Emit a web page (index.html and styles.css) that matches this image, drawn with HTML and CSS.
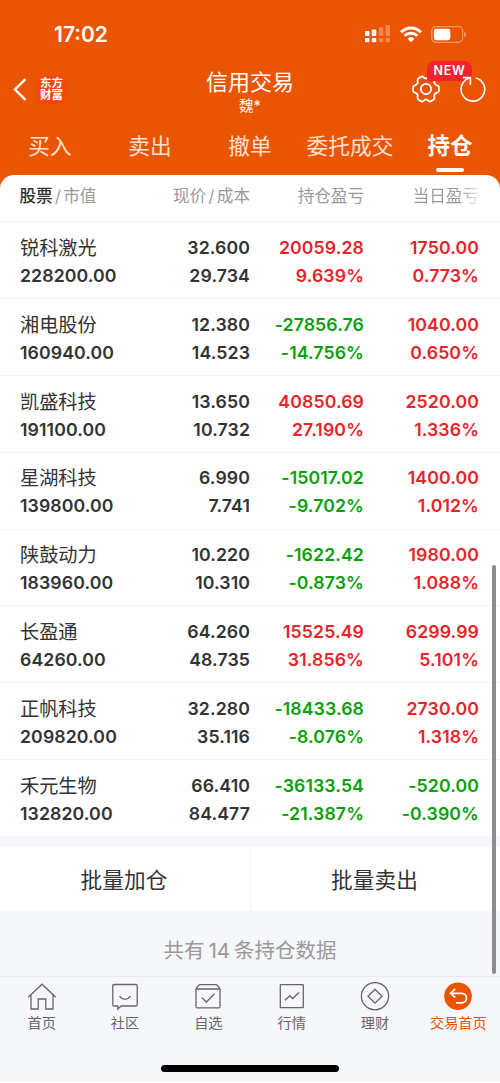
FILE: index.html
```html
<!DOCTYPE html>
<html lang="zh-CN">
<head>
  <meta charset="UTF-8" />
  <meta name="viewport" content="width=device-width, initial-scale=1.0"/>
  <title>信用交易 - 持仓</title>
  <link rel="stylesheet" href="styles.css">
</head>
<body>

  <div class="app">
    <header class="header">
      <div class="status-bar">
        <span class="time">17:02</span>
        <div class="status-icons">
          <svg width="26" height="18" viewBox="0 0 26 18" fill="#fff">
            <rect x="0" y="6" width="4.5" height="5" rx="1"/>
            <rect x="0" y="13" width="4.5" height="4.2" rx="1"/>
            <rect x="6.8" y="4.5" width="4.5" height="6.5" rx="1"/>
            <rect x="6.8" y="13" width="4.5" height="4.2" rx="1"/>
            <g opacity="0.3">
              <rect x="13.8" y="2.3" width="4.5" height="8.7" rx="1"/>
              <rect x="13.8" y="13" width="4.5" height="4.2" rx="1"/>
              <rect x="20.5" y="0" width="4.5" height="11" rx="1"/>
              <rect x="20.5" y="13" width="4.5" height="4.2" rx="1"/>
            </g>
          </svg>
          <svg width="22" height="17" viewBox="0 0 22 17" fill="none" stroke="#fff" stroke-width="2.9">
            <path d="M1 6.2C6.6 0.5 15.4 0.5 21 6.2"/>
            <path d="M4.6 9.8C8.2 6.3 13.8 6.3 17.4 9.8"/>
            <path d="M7.6 12.7C9.5 10.9 12.5 10.9 14.4 12.7L11 16.2Z" fill="#fff" stroke="none"/>
          </svg>
          <svg width="36" height="17" viewBox="0 0 36 17">
            <rect x="0.7" y="0.7" width="31" height="15.6" rx="4.5" fill="none" stroke="#fff" stroke-opacity="0.4" stroke-width="1.2"/>
            <rect x="2.8" y="2.8" width="16.5" height="11.4" rx="2.4" fill="#fff"/>
            <path d="M33.2 5.8C35.5 6.5 35.5 10.5 33.2 11.2Z" fill="#fff" fill-opacity="0.45"/>
          </svg>
        </div>
      </div>

      <div class="title-bar">
        <div class="title-left">
          <svg width="14" height="23" viewBox="0 0 14 23" fill="none" stroke="#fff" stroke-width="2.4">
            <path d="M12.5 1.2L2 11.5L12.5 21.8"/>
          </svg>
          <div class="logo"><span>东方</span><span>财富</span></div>
        </div>
        <div class="title-center">
          <h1>信用交易</h1>
          <p>魏*</p>
        </div>
        <div class="title-right">
          <svg width="30" height="30" viewBox="0 0 30 30" fill="none" stroke="#fff" stroke-width="1.8" stroke-linejoin="round">
            <path d="M9.9 2.9Q11.4 2 12.4 3.2Q15 5.8 17.6 3.2Q18.6 2 20.1 2.9L22.4 4.2Q23.8 5.2 23.4 6.8Q22.6 10.4 26.1 11.3Q27.9 11.7 27.9 13.2V16.8Q27.9 18.3 26.1 18.7Q22.6 19.6 23.4 23.2Q23.8 24.8 22.4 25.8L20.1 27.1Q18.6 28 17.6 26.8Q15 24.2 12.4 26.8Q11.4 28 9.9 27.1L7.6 25.8Q6.2 24.8 6.6 23.2Q7.4 19.6 3.9 18.7Q2.1 18.3 2.1 16.8V13.2Q2.1 11.7 3.9 11.3Q7.4 10.4 6.6 6.8Q6.2 5.2 7.6 4.2Z"/>
            <circle cx="15" cy="15" r="5.2"/>
          </svg>
          <svg class="refresh" width="28" height="28" viewBox="0 0 28 28" fill="none" stroke="#fff" stroke-width="1.6">
            <path d="M17 2.9A11.8 11.8 0 1 1 11.2 2.8"/>
            <path d="M3.9 2.6H11.4V10"/>
          </svg>
          <span class="badge">NEW</span>
        </div>
      </div>

      <nav class="tabs">
        <a>买入</a>
        <a>卖出</a>
        <a>撤单</a>
        <a>委托成交</a>
        <a class="active">持仓</a>
      </nav>
    </header>

    <main class="content">
      <section class="positions">
        <div class="table-head">
          <div><b>股票</b><i>/</i>市值</div>
          <div>现价<i>/</i>成本</div>
          <div>持仓盈亏</div>
          <div class="fade">当日盈亏</div>
        </div>

        <div class="row">
          <div><span class="name">锐科激光</span><span>228200.00</span></div>
          <div><span>32.600</span><span>29.734</span></div>
          <div class="up"><span>20059.28</span><span>9.639%</span></div>
          <div class="up"><span>1750.00</span><span>0.773%</span></div>
        </div>
        <div class="row">
          <div><span class="name">湘电股份</span><span>160940.00</span></div>
          <div><span>12.380</span><span>14.523</span></div>
          <div class="down"><span>-27856.76</span><span>-14.756%</span></div>
          <div class="up"><span>1040.00</span><span>0.650%</span></div>
        </div>
        <div class="row">
          <div><span class="name">凯盛科技</span><span>191100.00</span></div>
          <div><span>13.650</span><span>10.732</span></div>
          <div class="up"><span>40850.69</span><span>27.190%</span></div>
          <div class="up"><span>2520.00</span><span>1.336%</span></div>
        </div>
        <div class="row">
          <div><span class="name">星湖科技</span><span>139800.00</span></div>
          <div><span>6.990</span><span>7.741</span></div>
          <div class="down"><span>-15017.02</span><span>-9.702%</span></div>
          <div class="up"><span>1400.00</span><span>1.012%</span></div>
        </div>
        <div class="row">
          <div><span class="name">陕鼓动力</span><span>183960.00</span></div>
          <div><span>10.220</span><span>10.310</span></div>
          <div class="down"><span>-1622.42</span><span>-0.873%</span></div>
          <div class="up"><span>1980.00</span><span>1.088%</span></div>
        </div>
        <div class="row">
          <div><span class="name">长盈通</span><span>64260.00</span></div>
          <div><span>64.260</span><span>48.735</span></div>
          <div class="up"><span>15525.49</span><span>31.856%</span></div>
          <div class="up"><span>6299.99</span><span>5.101%</span></div>
        </div>
        <div class="row">
          <div><span class="name">正帆科技</span><span>209820.00</span></div>
          <div><span>32.280</span><span>35.116</span></div>
          <div class="down"><span>-18433.68</span><span>-8.076%</span></div>
          <div class="up"><span>2730.00</span><span>1.318%</span></div>
        </div>
        <div class="row">
          <div><span class="name">禾元生物</span><span>132820.00</span></div>
          <div><span>66.410</span><span>84.477</span></div>
          <div class="down"><span>-36133.54</span><span>-21.387%</span></div>
          <div class="down"><span>-520.00</span><span>-0.390%</span></div>
        </div>
      </section>

      <div class="batch">
        <button>批量加仓</button>
        <button>批量卖出</button>
      </div>

      <p class="summary">共有<span>14</span>条持仓数据</p>
      <div class="scrollbar"></div>
    </main>

    <nav class="bottom-nav">
      <a>
        <svg width="30" height="30" viewBox="0 0 30 30">
          <path d="M1.2 15.2L15 2.2L28.8 15.2M4 13V27H11.2V17H18.8V27H26V13"/>
        </svg>
        首页
      </a>
      <a>
        <svg width="30" height="30" viewBox="0 0 30 30">
          <path d="M4 2.5H26Q27.2 2.5 27.2 3.7V22.8Q27.2 24 26 24H11.2L7.8 27V24H4Q2.8 24 2.8 22.8V3.7Q2.8 2.5 4 2.5Z"/>
          <path d="M9.5 14.3Q15 20.6 20.5 14.3"/>
        </svg>
        社区
      </a>
      <a>
        <svg width="30" height="30" viewBox="0 0 30 30">
          <path d="M3 7L5.6 3.4Q6.2 2.7 7 2.7H23Q23.8 2.7 24.4 3.4L27 7V24.4Q27 25.8 25.6 25.8H4.4Q3 25.8 3 24.4ZM3 7H27"/>
          <path d="M8.8 15.6L13.4 20L21.5 11.8"/>
        </svg>
        自选
      </a>
      <a>
        <svg width="30" height="30" viewBox="0 0 30 30">
          <rect x="3.3" y="2.7" width="23" height="23" rx="0.5"/>
          <path d="M8 18.3L12.8 13.7L15.6 16.5L22 10.5"/>
        </svg>
        行情
      </a>
      <a>
        <svg width="30" height="30" viewBox="0 0 30 30">
          <circle cx="15" cy="14.2" r="13.6"/>
          <path d="M15 7.2L22 14.2L15 21.2L8 14.2Z"/>
        </svg>
        理财
      </a>
      <a class="active">
        <svg width="30" height="30" viewBox="0 0 30 30">
          <circle class="disc" cx="15" cy="14.2" r="13.8"/>
          <path d="M12.2 6.9L7.6 11.3L12.2 15.5M7.6 11.3H18.7A4.8 4.8 0 0 1 18.7 20.9H13"/>
        </svg>
        交易首页
      </a>
      <div class="home-indicator"></div>
    </nav>
  </div>

</body>
</html>
```

FILE: styles.css
```css
* {
  box-sizing: border-box;
}

body {
  margin: 0;
  background: #fff;
  font-family: Inter, 'Noto Sans CJK SC', sans-serif;
  color: #333;
}

.app {
  width: 500px;
  height: 1082px;
  display: flex;
  flex-direction: column;
  background: #f6f7fa;
  overflow: hidden;
}

/* header */
.header {
  height: 190px;
  flex-shrink: 0;
  background: #ea5504;
  color: #fff;
}

.status-bar {
  height: 62px;
  padding: 6px 33px 0 54px;
  display: flex;
  justify-content: space-between;
  align-items: center;
}

.time {
  font-size: 21px;
  font-weight: 600;
}

.status-icons {
  display: flex;
  align-items: center;
  gap: 9px;
}

.title-bar {
  height: 58px;
  display: grid;
  grid-template-columns: 1fr 120px 1fr;
}

.title-left {
  display: flex;
  align-items: center;
  gap: 10px;
  padding: 0 0 4px 13px;
}

.logo {
  width: 29px;
  height: 29px;
  border-radius: 6px;
  background: #fc460c;
  display: flex;
  flex-direction: column;
  align-items: center;
  justify-content: center;
  font-size: 11.5px;
  line-height: 12.5px;
  font-weight: 700;
}

.title-center {
  text-align: center;
}

h1 {
  margin: 4px 0 0;
  font-size: 22px;
  line-height: 32px;
  font-weight: 400;
}

.title-center p {
  margin: 0;
  font-size: 14.5px;
  line-height: 16px;
}

.title-right {
  position: relative;
  display: flex;
  justify-content: flex-end;
  align-items: center;
  gap: 18px;
  padding: 0 13px 5px 0;
}

.badge {
  position: absolute;
  top: -1px;
  right: 28px;
  width: 45px;
  height: 20px;
  border-radius: 8px 8px 8px 2px;
  background: #f5222d;
  font-size: 12.5px;
  line-height: 20px;
  font-weight: 600;
  letter-spacing: 0.7px;
  text-align: center;
}

.refresh {
  position: relative;
  z-index: 1;
}

.tabs {
  display: grid;
  grid-template-columns: repeat(5, 100px);
  height: 55px;
}

.tabs a {
  display: flex;
  flex-direction: column;
  align-items: center;
  font-size: 21.7px;
  line-height: 32px;
  padding-top: 10px;
  color: #ffe0cf;
}

.tabs .active {
  color: #fff;
  font-size: 22.5px;
  font-weight: 700;
}

.tabs .active::after {
  content: '';
  width: 28px;
  height: 4px;
  margin-top: 6px;
  border-radius: 2px;
  background: #fff;
}

/* positions table */
.content {
  position: relative;
  height: 801px;
  margin-top: -15px;
  flex-shrink: 0;
}

.positions {
  background: #fff;
  border-radius: 14px 14px 0 0;
}

.table-head,
.row {
  display: grid;
  grid-template-columns: 130px 100px 114px 115px;
  padding: 0 21px 0 20px;
  text-align: right;
}

.table-head {
  height: 46px;
  font-size: 16.6px;
  line-height: 42px;
  color: #999;
}

.table-head b {
  color: #333;
  font-weight: 500;
}

.table-head i {
  font-style: normal;
  margin: 0 2.3px;
}

.table-head div:first-child,
.row div:first-child {
  text-align: left;
}

.table-head div:first-child {
  margin-left: -0.5px;
}

.fade {
  background: linear-gradient(to right, #999 84%, #eee);
  -webkit-background-clip: text;
  background-clip: text;
  color: transparent;
}

.row {
  height: 76.9px;
  padding-top: 11.8px;
  border-top: 1px solid #f5f5f7;
  font-size: 17.7px;
  line-height: 28px;
  font-weight: 600;
  letter-spacing: 0.1px;
}

.row span {
  display: block;
  height: 28px;
}

.row .name {
  font-size: 19.2px;
  font-weight: 400;
  letter-spacing: 0;
}

.up {
  color: #e6252b;
}

.down {
  color: #0c9f0c;
}

.batch {
  display: grid;
  grid-template-columns: 1fr 1fr;
  height: 64px;
  margin-top: 10.8px;
  background: #fff;
}

.batch button {
  border: none;
  background: none;
  font-family: inherit;
  font-size: 21.7px;
  color: #333;
  padding: 0 2px 0 0;
}

.batch button + button {
  border-left: 1px solid #f3f3f5;
}

.summary {
  margin: 24px 0 0;
  font-size: 20.5px;
  line-height: 32px;
  text-align: center;
  color: #999;
}

.summary span {
  margin: 0 4px;
}

.scrollbar {
  position: absolute;
  right: 4px;
  top: 390px;
  width: 4px;
  height: 409px;
  border-radius: 2px;
  background: #8c8c8e;
}

/* bottom navigation */
.bottom-nav {
  position: relative;
  flex: 1;
  display: grid;
  grid-template-columns: repeat(6, 1fr);
  border-top: 1px solid #e9eaed;
}

.bottom-nav a {
  display: flex;
  flex-direction: column;
  align-items: center;
  padding-top: 5px;
  font-size: 14.2px;
  line-height: 22px;
  color: #666;
}

.bottom-nav svg {
  fill: none;
  stroke: #666;
  stroke-width: 1.3;
}

.bottom-nav .active {
  color: #ea5504;
}

.bottom-nav .active svg {
  stroke: #fff;
  stroke-width: 1.7;
}

.bottom-nav .disc {
  fill: #ea5504;
  stroke: none;
}

.home-indicator {
  position: absolute;
  left: 161px;
  bottom: 10px;
  width: 178px;
  height: 7px;
  border-radius: 4px;
  background: #000;
}
```
